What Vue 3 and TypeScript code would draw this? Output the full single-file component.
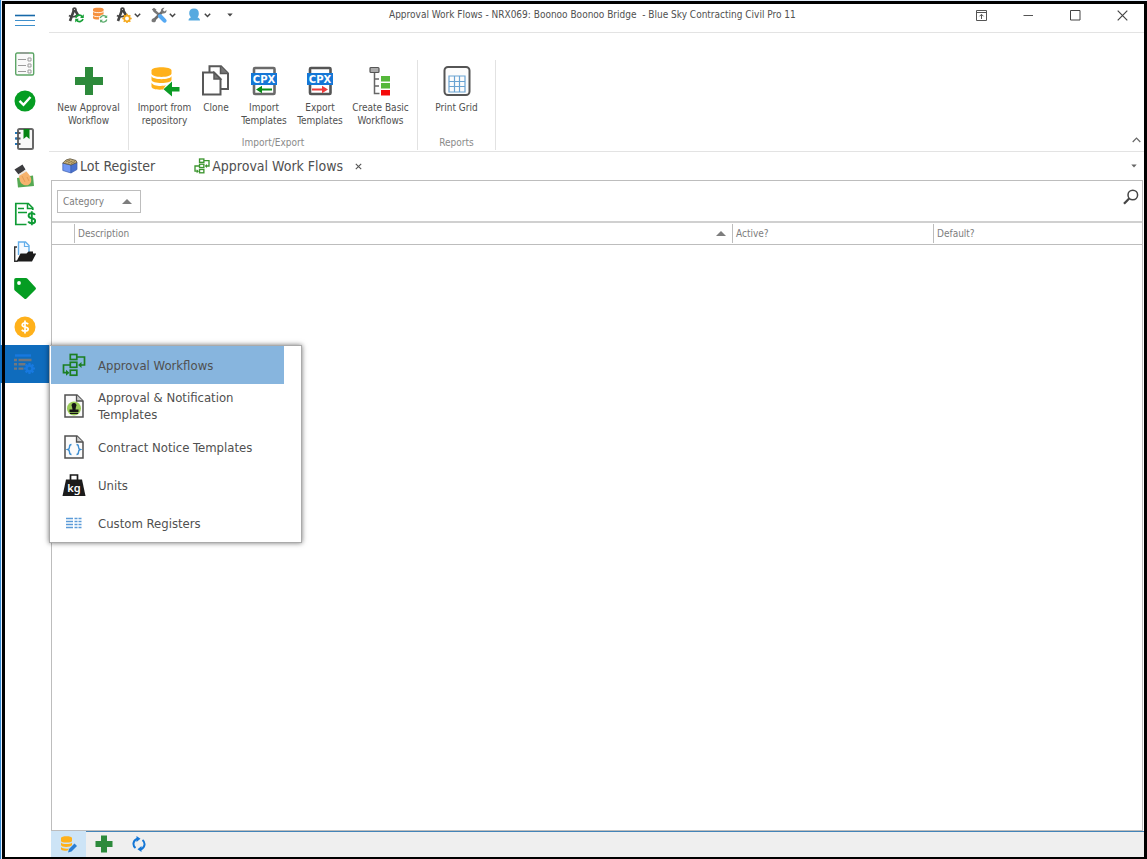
<script setup lang="ts">
import { ref } from 'vue'

interface MenuItem {
  id: string
  label: string
}

const menuItems: MenuItem[] = [
  { id: 'flow', label: 'Approval Workflows' },
  { id: 'stamp', label: 'Approval & Notification Templates' },
  { id: 'notice', label: 'Contract Notice Templates' },
  { id: 'units', label: 'Units' },
  { id: 'custom', label: 'Custom Registers' },
]
const selected = ref<string>('flow')
</script>

<template>
  <div class="desktop">
    <div class="window">
      <nav class="sidebar" aria-label="Modules">
        <button class="burger" aria-label="Toggle navigation">
          <svg width="20" height="13" viewBox="0 0 20 13"><path d="M0 1.500h20" stroke="#1668a8" stroke-width="1.600" /><path d="M0 6.500h20M0 11.500h20" stroke="#3d8fcb" stroke-width="1" /></svg>
        </button>
        <div class="modules">
          <button class="module" aria-label="Checklists">
            <svg width="22" height="24" viewBox="0 0 22 24"><rect x="1.700" y="1" width="18" height="22" rx="1.500" fill="#fafafa" stroke="#5da566" stroke-width="1.400" /><path d="M6 1h9" stroke="#999" stroke-width="1.500" /><path d="M4 7.500h8M4 13.500h8M4 19.500h8" stroke="#9b9b9b" stroke-width="1.200" /><path d="M14 6h3v3h-3zM14 12h3v3h-3zM14 18h3v3h-3z" fill="none" stroke="#9b9b9b" /></svg>
          </button>
          <button class="module" aria-label="Approvals">
            <svg width="22" height="22" viewBox="0 0 22 22"><circle cx="11" cy="11" r="10.500" fill="#059d22" /><path d="M5.500 10.800 9.500 14.800 16.500 7" fill="none" stroke="#fff" stroke-width="2.400" /></svg>
          </button>
          <button class="module" aria-label="Diary">
            <svg width="22" height="22" viewBox="0 0 22 22"><rect x="4" y="1" width="15" height="20" rx="1.500" fill="#f8f8f8" stroke="#686868" stroke-width="2" /><path d="M1.500 5h5M1.500 10.500h5M1.500 16h5" stroke="#555" stroke-width="1.800" /><path d="M1 5h2M1 10.500h2M1 16h2" stroke="#2476b8" stroke-width="2.200" /><path d="M9.500 1h6v10l-3-2.500-3 2.500z" fill="#058412" /></svg>
          </button>
          <button class="module" aria-label="Payments">
            <svg width="22" height="24" viewBox="0 0 22 24"><path d="M3 14 19 11.500 20 22 4 23.500z" fill="#55a953" /><path d="M5.500 9.500c1-2 5.500-4 7-2 1 1.500 4 4 4.500 6.500.6 3 .3 5-2 6.500-2 1.500-5 1-7.500-1-2-2-3-8-2-10z" fill="#f6b36e" /><path d="M8 12l3 6M13 13l2 4" stroke="#e39c57" fill="none" /><path d="M.5 5.500 8.500.5l3 5-7 5z" fill="#3c3c3f" /><path d="M4 10.500 11.500 6l.8 1.600L5 12z" fill="#e8e8e8" /></svg>
          </button>
          <button class="module" aria-label="Progress claims">
            <svg width="22" height="24" viewBox="0 0 22 24"><path d="M12.500 22.500H1.800V1.500h12.500l4.500 4.500v2" fill="none" stroke="#0f9b35" stroke-width="1.700" /><path d="M13.500 1.500V6.500h5" fill="none" stroke="#0f9b35" stroke-width="1.500" /><path d="M4 6.500h6M4 10.500h9" stroke="#0f9b35" stroke-width="1.600" /><path d="M21 12.800c-.7-1-2-1.500-3.300-1.500-1.900 0-3.100.9-3.100 2.400 0 3.500 6.600 1.700 6.600 5 0 1.600-1.500 2.600-3.300 2.600-1.700 0-3-.6-3.700-1.800M17.800 9.300v14" fill="none" stroke="#0f9b35" stroke-width="1.900" /></svg>
          </button>
          <button class="module" aria-label="Documents">
            <svg width="22" height="22" viewBox="0 0 22 22"><path d="M4.500 14V1h7l3.500 3.500V12" fill="#f5faff" stroke="#63aeea" stroke-width="1.400" /><path d="M10.500 1v4.500h4.500" fill="none" stroke="#63aeea" stroke-width="1.200" /><path d="M3 6H.7v14.200h3" fill="none" stroke="#333" stroke-width="1.400" /><path d="M2.500 20.500 6.500 12.500h6l2-2h4.500v2h3.200L18 20.500z" fill="#1b1b1b" /></svg>
          </button>
          <button class="module" aria-label="Lots">
            <svg width="22" height="22" viewBox="0 0 22 22"><path d="M2 0h9.500c1 0 1.500.3 2 .8l8 8.700c.6.700.6 1.300 0 2L12.500 20.500c-.8.800-1.500.8-2.300 0L.8 12.500C.3 12 .2 11.500.2 11V2C.2.800.8 0 2 0z" fill="#059d22" /><circle cx="5" cy="5" r="1.900" fill="#fff" /></svg>
          </button>
          <button class="module" aria-label="Costs">
            <svg width="22" height="22" viewBox="0 0 22 22"><circle cx="11" cy="11" r="10.500" fill="#ffb11b" /><path d="M14.200 8.300c-.6-.9-1.700-1.400-3-1.400-1.800 0-3 .8-3 2.100 0 2.800 6 1.300 6 4.100 0 1.300-1.300 2.100-3.100 2.100-1.500 0-2.700-.5-3.300-1.500M11 4.500v13" fill="none" stroke="#fff" stroke-width="1.700" /></svg>
          </button>
          <div class="module-wrap">
            <button class="module active" aria-label="Setup" aria-expanded="true">
              <svg width="22" height="22" viewBox="0 0 22 22"><path d="M1 2.500h16" stroke="#1779e0" stroke-width="2.400" /><path d="M0 7h3M4.500 7h13M0 11.300h3M4.500 11.300h7M0 15.600h3M4.500 15.600h5" stroke="#71777e" stroke-width="2.400" /><circle cx="15.500" cy="15.500" r="4.200" fill="#1779e0" /><path d="M15.500 10v11M10 15.500h11M11.600 11.600l7.800 7.800M19.400 11.600l-7.800 7.800" stroke="#1779e0" stroke-width="2.200" /><circle cx="15.500" cy="15.500" r="1.700" fill="#0f6cbd" /></svg>
            </button>
            <div class="flyout" role="menu">
              <button
                v-for="item in menuItems"
                :key="item.id"
                role="menuitem"
                class="entry"
                :class="{ chosen: selected === item.id, tall: item.id === 'stamp' }"
                @click="selected = item.id"
              >
                <span class="entry-icon">
                  <svg v-if="item.id === 'flow'" width="24" height="24" viewBox="0 0 24 24"><g fill="none" stroke="#1c7f22" stroke-width="1.700"><rect x="8.300" y="1.500" width="6.500" height="5" /><rect x="8.300" y="9.300" width="6.500" height="5" /><rect x="8.300" y="17.200" width="6.500" height="5" /><path d="M15 4h7.500v8H19M8 12H1.500v7.700H5" /></g><path d="M19.500 9v6L16 12zM4 16.700v6l3.500-3z" fill="#1c7f22" /></svg>
                  <svg v-else-if="item.id === 'stamp'" width="20" height="24" viewBox="0 0 20 24"><path d="M1 1h12l6 6v16H1z" fill="#fafafa" stroke="#505050" stroke-width="1.500" /><path d="M12.500 1v6H19" fill="#ccc" stroke="#505050" stroke-width="1.300" /><circle cx="10" cy="14.500" r="7" fill="#9acb58" /><path d="M10 9a2.400 2.400 0 0 1 2 3.800l-.5 2.700h3V18h-9v-2.500h3L8 12.800A2.400 2.400 0 0 1 10 9zM6 18.700h8v1.300H6z" fill="#151515" /></svg>
                  <svg v-else-if="item.id === 'notice'" width="20" height="24" viewBox="0 0 20 24"><path d="M1 1h12l6 6v16H1z" fill="#fbfbfb" stroke="#505050" stroke-width="1.500" /><path d="M12.500 1v6H19" fill="#ccc" stroke="#505050" stroke-width="1.300" /><path d="M7.500 9.500c-2 0-2 1-2 2.500s0 2-1.700 2.500c1.700.5 1.700 1 1.700 2.500s0 2.500 2 2.500M12.500 9.500c2 0 2 1 2 2.500s0 2 1.700 2.500c-1.700.5-1.700 1-1.700 2.500s0 2.500-2 2.500" fill="none" stroke="#3f8fd2" stroke-width="1.400" /></svg>
                  <svg v-else-if="item.id === 'units'" width="24" height="24" viewBox="0 0 24 24"><path d="M8.500 7V2h7v5" fill="none" stroke="#1b1b1b" stroke-width="1.700" /><path d="M4 6.500h16L23.500 23H.5z" fill="#1b1b1b" /><text x="12" y="19" text-anchor="middle" font-family="Noto Sans, sans-serif" font-weight="600" font-size="11" fill="#fff">kg</text></svg>
                  <svg v-else width="16" height="12" viewBox="0 0 16 12"><path d="M0 1.500h7M0 4.500h7M0 7.500h7M0 10.500h7M8.500 1.500h3M8.500 4.500h3M8.500 7.500h3M8.500 10.500h3M12.500 1.500h3M12.500 4.500h3M12.500 7.500h3M12.500 10.500h3" stroke="#5b9bd8" stroke-width="1.300" /></svg>
                </span>
                <span class="entry-label">{{ item.label }}</span>
              </button>
            </div>
          </div>
        </div>
      </nav>

      <div class="main">
        <header class="titlebar">
          <div class="quick">
            <button class="q" aria-label="Refresh project">
              <svg width="16" height="16" viewBox="0 0 16 16"><g fill="none" stroke="#444"><path d="M6 3 2 14M7 3l3.500 6" stroke-width="2.600" /><path d="M1 8.500c3 2.200 7 1.500 9-1.500" stroke-width="1.600" /><circle cx="6.500" cy="2.500" r="1.400" stroke-width="1.800" /></g><path d="M7.800 10.800a3.600 3.600 0 0 1 6.500-1M15 12a3.600 3.600 0 0 1-6.500 1" fill="none" stroke="#16a036" stroke-width="1.700" /><path d="M15.800 7.200v3.800H12zM7.200 15.500v-3.800H11z" fill="#16a036" /></svg>
            </button>
            <button class="q" aria-label="Refresh data">
              <svg width="16" height="16" viewBox="0 0 16 16"><path d="M1 2.200C1 .3 11.500.3 11.500 2.200V11c0 2-10.500 2-10.500 0z" fill="#f6903d" /><path d="M1 4.200c0 1.900 10.500 1.900 10.500 0M1 8.200c0 1.900 10.500 1.900 10.500 0" fill="none" stroke="#fff" stroke-width=".9" /><circle cx="11.500" cy="12" r="4.500" fill="#fff" /><path d="M8.300 11a3.400 3.400 0 0 1 5.800-1.200M14.800 12.500a3.400 3.400 0 0 1-5.800 1.500" fill="none" stroke="#5fae70" stroke-width="1.300" /><path d="M15.200 8v3h-3zM8 15.800v-3h3z" fill="#5fae70" /></svg>
            </button>
            <button class="q with-arrow" aria-label="Project options">
              <svg width="16" height="16" viewBox="0 0 16 16"><g fill="none" stroke="#444"><path d="M6 3 2 14M7 3l3.500 6" stroke-width="2.600" /><path d="M1 8.500c3 2.200 7 1.500 9-1.500" stroke-width="1.600" /><circle cx="6.500" cy="2.500" r="1.400" stroke-width="1.800" /></g><circle cx="11" cy="11.500" r="2.800" fill="#fff" stroke="#f5a81c" stroke-width="1.700" /><path d="M11 6.800v2M11 14.200v2M6.300 11.500h2M13.700 11.500h2M7.700 8.200l1.400 1.400M12.900 13.400l1.400 1.400M14.300 8.200l-1.400 1.400M9.100 13.400l-1.400 1.400" stroke="#f5a81c" stroke-width="1.500" /></svg>
              <svg class="chev" width="7" height="5" viewBox="0 0 7 5"><path d="M.8.800 3.500 3.500 6.200.8" fill="none" stroke="#444" stroke-width="1.500" /></svg>
            </button>
            <button class="q with-arrow" aria-label="Tools">
              <svg width="16" height="16" viewBox="0 0 16 16"><path d="M3 3.500 9 8.500" stroke="#777" stroke-width="2.400" /><path d="M.8 2.500 3 .8l2.500 2-2 2.500z" fill="#777" /><path d="M2.500 13.500 12 4" stroke="#6d6d6d" stroke-width="2.600" /><path d="M10 4.500C9.500 2.500 11 .5 13.500.8L11.800 3l1.500 1.500L15.500 3c.3 2.500-1.500 4-4 3.500zM.7 14.500c-.6-1.500.6-3.500 2.500-3.200l1.800 2c0 1.700-2 3-4.300 1.200z" fill="#777" /><path d="M9 9 13.500 13.700" stroke="#55a9f3" stroke-width="4" stroke-linecap="round" /></svg>
              <svg class="chev" width="7" height="5" viewBox="0 0 7 5"><path d="M.8.800 3.500 3.500 6.200.8" fill="none" stroke="#444" stroke-width="1.500" /></svg>
            </button>
            <button class="q with-arrow" aria-label="User">
              <svg width="16" height="16" viewBox="0 0 16 16"><path d="M8 1.500c3.200 0 4.800 1.800 4.800 4.700 0 1.800-.3 3-1.300 4.200 1.200.5 2.500.8 2.500 3.100H2.500c0-2.300 1.300-2.600 2.500-3.100C4 9.200 3.200 8 3.200 6.200 3.200 3.300 4.800 1.500 8 1.500z" fill="#56aae0" /></svg>
              <svg class="chev" width="7" height="5" viewBox="0 0 7 5"><path d="M.8.800 3.500 3.500 6.200.8" fill="none" stroke="#444" stroke-width="1.500" /></svg>
            </button>
            <button class="q more" aria-label="Customise toolbar">
              <svg width="6" height="4" viewBox="0 0 6 4"><path d="M.3.500h5.400L3 3.500z" fill="#444" /></svg>
            </button>
          </div>
          <h1 class="title">Approval Work Flows - NRX069: Boonoo Boonoo Bridge&nbsp; - Blue Sky Contracting Civil Pro 11</h1>
          <div class="controls">
            <button aria-label="Ribbon display options"><svg width="11" height="11" viewBox="0 0 11 11"><path d="M.5.500h10v10H.5zM.5 2.500h10M5.500 9V4.500M3.500 6.300l2-2 2 2" fill="none" stroke="#555" /></svg></button>
            <button aria-label="Minimise"><svg width="11" height="11" viewBox="0 0 11 11"><path d="M.5 5.500h9.500" stroke="#555" /></svg></button>
            <button aria-label="Maximise"><svg width="11" height="11" viewBox="0 0 11 11"><path d="M.5.500h9.500v9.500H.5z" fill="none" stroke="#444" /></svg></button>
            <button aria-label="Close"><svg width="11" height="11" viewBox="0 0 11 11"><path d="M.7.700l9.600 9.600M10.300.700.7 10.300" stroke="#444" stroke-width="1.200" /></svg></button>
          </div>
        </header>

        <section class="ribbon" aria-label="Ribbon">
          <div class="group g-new">
            <div class="actions">
              <button class="action"><svg width="32" height="32" viewBox="0 0 32 32"><path d="M12 2h8v10h10v8H20v10h-8V20H2v-8h10z" fill="#2d8a3b" /></svg><span>New Approval<br />Workflow</span></button>
            </div>
            <div class="caption"></div>
          </div>
          <div class="group g-io">
            <div class="actions">
              <button class="action"><svg width="32" height="32" viewBox="0 0 32 32"><path d="M2.500 5.500C2.500 1.200 22.500 1.200 22.500 5.500V8.500C22.500 13 2.500 13 2.500 8.500z" fill="#ffb11b" /><path d="M2.500 11c1 4.200 19 4.200 20 0v3.800c0 4.300-20 4.300-20 0zM2.500 17.500c1 4 12 4 14.500 2.500l-3 4.500c-6 .6-11.500-.5-11.500-3z" fill="#ffb11b" /><path d="M14.500 24.300 23 16.500v5.500h7.500v4.500H23v5z" fill="#0b9b25" /></svg><span>Import from<br />repository</span></button>
              <button class="action"><svg width="32" height="32" viewBox="0 0 32 32"><path d="M9.500 7V1.300h11.500l7 7V24h-7.500" fill="none" stroke="#585858" stroke-width="2" /><path d="M20.500 1v7.500H28" fill="#777" stroke="#585858" stroke-width="1.500" /><path d="M3 7.500h11l6.500 6.500v15.500H3z" fill="#fff" stroke="#585858" stroke-width="2" /><path d="M14 7.500v6.500h6.500z" fill="#777" stroke="#585858" stroke-width="1.500" /></svg><span>Clone</span></button>
              <button class="action"><svg width="32" height="32" viewBox="0 0 32 32"><rect x="6" y="3" width="20.500" height="26" rx="1" fill="#fff" stroke="#6a6a6a" stroke-width="2.600" /><rect x="3" y="8" width="26" height="12" fill="#1577d6" /><text x="16" y="17.600" text-anchor="middle" font-family="DejaVu Sans, sans-serif" font-weight="700" font-size="10" fill="#fff">CPX</text><path d="M8 24.500 14 20.800v2.700h10v2H14v2.700z" fill="#078b14" /></svg><span>Import<br />Templates</span></button>
              <button class="action"><svg width="32" height="32" viewBox="0 0 32 32"><rect x="6" y="3" width="20.500" height="26" rx="1" fill="#fff" stroke="#555" stroke-width="2.600" /><rect x="3" y="8" width="26" height="12" fill="#1577d6" /><text x="16" y="17.600" text-anchor="middle" font-family="DejaVu Sans, sans-serif" font-weight="700" font-size="10" fill="#fff">CPX</text><path d="M24 24.500 18 20.800v2.700H8v2h10v2.700z" fill="#ee3b3b" /></svg><span>Export<br />Templates</span></button>
              <button class="action"><svg width="32" height="32" viewBox="0 0 32 32"><path d="M9.500 8v20.500h5M9.500 14h4.500M9.500 21h4.500" fill="none" stroke="#666" stroke-width="1.500" /><rect x="5" y="2.500" width="9" height="5" rx="1" fill="#ababab" stroke="#555" stroke-width="1.200" /><path d="M16 11h9v5.500h-9zM16 18h9v5.500h-9z" fill="#55b83b" /><path d="M16 25h9v5.500h-9z" fill="#f50a0a" /></svg><span>Create Basic<br />Workflows</span></button>
            </div>
            <div class="caption">Import/Export</div>
          </div>
          <div class="group g-rep">
            <div class="actions">
              <button class="action"><svg width="32" height="32" viewBox="0 0 32 32"><rect x="3.500" y="2" width="25" height="28" rx="3.500" fill="#fcfcfc" stroke="#555" stroke-width="2" /><path d="M8 11h16v16H8zM8 16.500h16M8 21.500h16M13.500 11v16M18.500 11v16" fill="none" stroke="#6aa3d2" stroke-width="1.200" /></svg><span>Print Grid</span></button>
            </div>
            <div class="caption">Reports</div>
          </div>
          <button class="collapse" aria-label="Collapse the ribbon"><svg width="9" height="6" viewBox="0 0 9 6"><path d="M.7 5 4.500 1.200 8.300 5" fill="none" stroke="#666" stroke-width="1.200" /></svg></button>
        </section>

        <div class="tabs" role="tablist">
          <button class="tab" role="tab" aria-selected="false">
            <svg width="16" height="16" viewBox="0 0 16 16"><path d="M.8 5 9 7v8L.8 12.500z" fill="#7197f3" stroke="#3c5fae" stroke-width=".7" /><path d="M9 7l6-2.500v7L9 15z" fill="#4a72cf" stroke="#3c5fae" stroke-width=".7" /><path d="M.8 5 4 2l4-1.200L14 2.500l1 2L9 7z" fill="#c9b27b" stroke="#5b5340" stroke-width=".8" /><path d="M3.500 4 8 2.200M6 5l4.500-2M9 5.500l4-2" stroke="#7b6a42" stroke-width=".8" /></svg>
            Lot Register
          </button>
          <button class="tab current" role="tab" aria-selected="true">
            <svg width="16" height="16" viewBox="0 0 24 24"><g fill="none" stroke="#3c952f" stroke-width="2"><rect x="8.300" y="1.500" width="6.500" height="5" /><rect x="8.300" y="9.300" width="6.500" height="5" /><rect x="8.300" y="17.200" width="6.500" height="5" /><path d="M15 4h7.500v8H19M8 12H1.500v7.700H5" /></g><path d="M19.500 9v6L16 12zM4 16.700v6l3.500-3z" fill="#3c952f" /></svg>
            Approval Work Flows
          </button>
          <button class="tab-close" aria-label="Close tab"><svg width="7" height="7" viewBox="0 0 7 7"><path d="M.8.800l5.400 5.400M6.200.800.8 6.200" stroke="#555" stroke-width="1.100" /></svg></button>
          <button class="tab-list" aria-label="List tabs"><svg width="6" height="4" viewBox="0 0 6 4"><path d="M.3.500h5.400L3 3.500z" fill="#666" /></svg></button>
        </div>

        <section class="grid">
          <div class="group-panel">
            <button class="chip">Category<svg width="10" height="5" viewBox="0 0 10 5"><path d="M0 5 5 0l5 5z" fill="#7d7d7d" /></svg></button>
            <button class="search" aria-label="Search"><svg width="16" height="16" viewBox="0 0 16 16"><circle cx="9.800" cy="6" r="4.800" fill="none" stroke="#454545" stroke-width="1.500" /><path d="M6.200 9.500 1 14.700" stroke="#454545" stroke-width="2.300" /></svg></button>
          </div>
          <table class="data">
            <thead>
              <tr>
                <th class="c-mark"></th>
                <th><div class="head">Description<svg width="10" height="5" viewBox="0 0 10 5"><path d="M0 5 5 0l5 5z" fill="#7d7d7d" /></svg></div></th>
                <th class="c-active"><div class="head">Active?</div></th>
                <th class="c-default"><div class="head">Default?</div></th>
              </tr>
            </thead>
          </table>
        </section>

        <footer class="bottom">
          <button class="b on" aria-label="Edit data"><svg width="18" height="18" viewBox="0 0 18 18"><path d="M1 3C1 .5 12 .5 12 3v3c0 2-11 2-11 0zM1 7.500c1 2 10 2 11 0V10c-1 2.500-11 2.500-11 0zM1 12c1 1.500 5 2 8 1.500l-1.500 2C4 16 1 15.500 1 14z" fill="#ffb11b" /><path d="M8 17.500 9 14l5.500-5.500 2.500 2.500-5.500 5.500z" fill="#2b7fd4" /></svg></button>
          <button class="b" aria-label="Add"><svg width="18" height="18" viewBox="0 0 18 18"><path d="M6 .5h6V6h5.500v6H12v5.500H6V12H.5V6H6z" fill="#2d8a3b" /></svg></button>
          <button class="b" aria-label="Refresh"><svg width="14" height="16" viewBox="0 0 14 16"><path d="M5.500 2.700A5.300 5.300 0 0 0 3.500 12M8.500 13.300A5.300 5.300 0 0 0 10.500 4" fill="none" stroke="#1577d6" stroke-width="2" /><path d="M4.500 0 8.500 2.800 4.500 6zM9.500 16 5.500 13.200 9.500 10z" fill="#1577d6" /></svg></button>
        </footer>
      </div>
    </div>
  </div>
</template>

<style>
body {
  margin: 0;
}
</style>

<style scoped>
.desktop {
  box-sizing: border-box;
  display: flex;
  min-height: 100vh;
  padding: 1px 0 0 2px;
  background: linear-gradient(to right, #2f86d0 1px, #e4eefa 1px);
  font-family: "DejaVu Sans Condensed", Tahoma, "Noto Sans", sans-serif;
  font-size: 10px;
  color: #505050;
}
button {
  margin: 0;
  padding: 0;
  border: 0;
  background: none;
  font: inherit;
  color: inherit;
}
svg {
  display: block;
  flex: none;
}
.window {
  flex: 1;
  display: flex;
  min-width: 0;
  border: 3px solid #000;
  border-bottom-width: 2px;
  background: #fff;
}
.sidebar {
  flex: none;
  width: 44px;
}
.burger {
  display: flex;
  align-items: center;
  height: 32px;
  padding-left: 10px;
}
.modules {
  display: grid;
  grid-auto-rows: 1fr;
  height: 338px;
  margin-top: 9px;
}
.module {
  display: flex;
  align-items: center;
  width: 44px;
  height: 100%;
  padding-left: 9px;
}
.module-wrap {
  position: relative;
}
.module-wrap::before {
  content: "";
  position: absolute;
  top: 0;
  bottom: 0;
  left: -5px;
  width: 2px;
  background: #0f6cbd;
}
.module.active {
  background: #0f6cbd;
}
.flyout {
  position: absolute;
  z-index: 5;
  top: 0;
  left: 44px;
  box-sizing: border-box;
  width: 253px;
  padding: 0 0 0 1px;
  border: 1px solid #aaa;
  background: #fff;
  box-shadow: 0 0 5px rgba(0, 0, 0, 0.55);
}
.entry {
  display: flex;
  align-items: center;
  width: 233px;
  height: 38px;
  text-align: left;
  font-size: 13px;
  line-height: 17px;
}
.entry.tall {
  height: 44px;
}
.entry.chosen {
  background: #87b5de;
}
.entry-icon {
  display: flex;
  justify-content: center;
  width: 24px;
  margin: 0 12px 0 11px;
}
.entry-label {
  width: 170px;
}
.main {
  flex: 1;
  min-width: 0;
  display: flex;
  flex-direction: column;
}
.titlebar {
  display: flex;
  justify-content: space-between;
  height: 28px;
  border-bottom: 1px solid #e3e3e3;
}
.quick {
  display: flex;
  align-items: center;
  box-sizing: border-box;
  width: 340px;
  height: 22px;
  padding-left: 19px;
}
.q {
  display: flex;
  align-items: center;
  margin-right: 8px;
}
.q.with-arrow {
  gap: 2px;
  margin-right: 10px;
}
.q.more {
  margin-left: 6px;
}
.title {
  flex: 1;
  margin: 0;
  font-size: 10px;
  font-weight: 400;
  line-height: 22px;
  white-space: nowrap;
}
.controls {
  display: flex;
  align-items: center;
  gap: 36px;
  height: 22px;
  padding-right: 16px;
}
.ribbon {
  display: flex;
  height: 118px;
  border-bottom: 1px solid #e3e3e3;
}
.group {
  box-sizing: border-box;
  display: flex;
  flex-direction: column;
  height: 90px;
  margin-top: 27px;
  border-right: 1px solid #e2e2e2;
}
.g-new {
  width: 80px;
}
.g-io {
  width: 289px;
}
.g-rep {
  width: 78px;
}
.actions {
  display: grid;
  flex: 1;
}
.g-io .actions {
  grid-template-columns: 71px 32px 64px 48px 73px;
}
.action {
  display: flex;
  flex-direction: column;
  align-items: center;
  justify-content: flex-start;
  gap: 4px;
  padding-top: 5px;
  line-height: 13px;
  white-space: nowrap;
}
.caption {
  height: 14px;
  line-height: 14px;
  text-align: center;
  color: #8a8a8a;
}
.collapse {
  align-self: flex-end;
  margin: 0 3px 8px auto;
}
.tabs {
  display: flex;
  align-items: center;
  height: 28px;
  padding: 0 7px 0 13px;
}
.tab {
  display: flex;
  align-items: center;
  gap: 2px;
  font-size: 14px;
}
.tab.current {
  margin-left: 39px;
}
.tab-close {
  margin-left: 12px;
}
.tab-list {
  margin-left: auto;
}
.grid {
  flex: 1;
  margin: 0 1px 0 2px;
  border: 1px solid #bdbdbd;
}
.group-panel {
  display: flex;
  align-items: center;
  justify-content: space-between;
  height: 40px;
  padding: 0 3px 0 5px;
}
.chip {
  display: flex;
  align-items: center;
  justify-content: space-between;
  box-sizing: border-box;
  width: 84px;
  height: 23px;
  padding: 0 8px 0 5px;
  border: 1px solid #bdbdbd;
  color: #7d7d7d;
}
.search {
  margin-bottom: 9px;
}
.data {
  width: 100%;
  table-layout: fixed;
  border-collapse: collapse;
  border-top: 2px solid #d0d0d0;
  border-bottom: 1px solid #bdbdbd;
}
.data th {
  height: 21px;
  padding: 0;
  font-weight: 400;
  text-align: left;
  color: #7d7d7d;
}
.c-mark {
  width: 22px;
}
.c-active {
  width: 201px;
}
.c-default {
  width: 209px;
}
.head {
  display: flex;
  align-items: center;
  justify-content: space-between;
  height: 19px;
  padding: 0 6px 0 3px;
  border-left: 1px solid #bdbdbd;
}
.bottom {
  display: flex;
  height: 26px;
  margin-left: 2px;
  background: #efefef;
  box-shadow: inset 0 1px #4384b8;
}
.b {
  display: flex;
  align-items: center;
  justify-content: center;
  width: 35px;
}
.b.on {
  background: #cde4f6;
}
</style>
